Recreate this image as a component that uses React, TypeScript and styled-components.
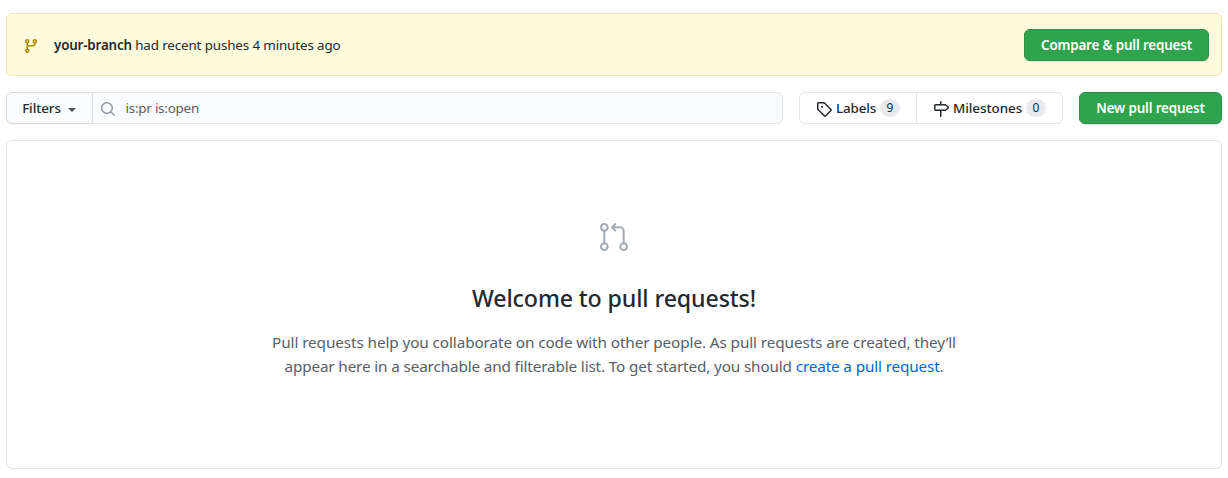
import React from "react";
import styled, { createGlobalStyle } from "styled-components";

const GlobalStyle = createGlobalStyle`
  * { box-sizing: border-box; }
  body {
    margin: 0;
    background: #fff;
    color: #24292e;
    font: 13.4px/20px "Segoe UI", "Noto Sans", sans-serif;
  }
`;

const Page = styled.main`
  display: flex;
  flex-direction: column;
  gap: 16px;
  padding: 13px 6px 0;
`;

const Text = styled.span<{ $width: number; $spacing: number }>`
  flex: none;
  width: ${(p) => p.$width}px;
  font-weight: 500;
  letter-spacing: ${(p) => p.$spacing}px;
  white-space: nowrap;
`;

const Flash = styled.section`
  display: flex;
  align-items: center;
  height: 63px;
  padding: 0 12px 0 16px;
  border: 1px solid #f0e3ad;
  border-radius: 6px;
  background: #fffbdd;
`;

const FlashMessage = styled.div`
  display: flex;
  align-items: center;
  flex: 1;
  gap: 15px;
  padding-top: 1px;
`;

const FlashText = styled.p`
  margin: 0;
  letter-spacing: -0.13px;

  strong {
    font-weight: 600;
    letter-spacing: -0.18px;
  }
`;

const PrimaryButton = styled.button<{ $width: number }>`
  width: ${(p) => p.$width}px;
  height: 32px;
  padding: 0;
  border: 1px solid #2a8f47;
  border-radius: 6px;
  background: #2ea44f;
  color: #fff;
  font: inherit;
  font-weight: 600;
  letter-spacing: -0.15px;
  white-space: nowrap;
  box-shadow: 0 1px 0 rgba(27, 31, 35, 0.1);
`;

const Toolbar = styled.div`
  display: flex;
  gap: 16px;
  height: 32px;
`;

const SearchGroup = styled.div`
  display: flex;
  flex: 1;
`;

const FilterButton = styled.button`
  display: flex;
  align-items: center;
  width: 87px;
  padding: 0 0 0 15px;
  border: 1px solid #d9dcdf;
  border-radius: 6px 0 0 6px;
  background: #fafbfc;
  color: #24292e;
  font: inherit;
  box-shadow: 0 1px 0 rgba(27, 31, 35, 0.04);
`;

const Caret = styled.i`
  margin: 3px 0 0 7px;
  border: 4px solid transparent;
  border-top-color: #4c5156;
  border-bottom: 0;
`;

const SearchField = styled.div`
  display: flex;
  align-items: center;
  flex: 1;
  gap: 9.5px;
  padding-left: 7px;
  border: 1px solid #e1e4e8;
  border-left: 0;
  border-radius: 0 6px 6px 0;
  background: #fafbfc;
  color: #586069;
  letter-spacing: -0.22px;
`;

const Subnav = styled.nav`
  display: flex;
  width: 264px;
  border: 1px solid #e1e4e8;
  border-radius: 6px;
`;

const SubnavItem = styled.a<{ $width: number }>`
  display: flex;
  align-items: center;
  gap: 4px;
  width: ${(p) => p.$width}px;
  padding-left: 16px;

  & + & {
    border-left: 1px solid #e1e4e8;
  }
`;

const Counter = styled.span`
  width: 20px;
  height: 18px;
  border-radius: 9px;
  background: #e8eaed;
  font-size: 12px;
  line-height: 18px;
  text-align: center;
`;

const Blankslate = styled.section`
  display: flex;
  flex-direction: column;
  align-items: center;
  height: 329px;
  padding-top: 80px;
  border: 1px solid #e1e4e8;
  border-radius: 6px;
`;

const Heading = styled.h3`
  margin: 27px 0 0;
  font-size: 23.2px;
  font-weight: 500;
  line-height: 36px;
  letter-spacing: -0.12px;
`;

const Description = styled.p`
  margin: 14px 0 0;
  color: #586069;
  font-size: 15.3px;
  line-height: 24px;
  text-align: center;
`;

const Line = styled.span<{ $spacing: number }>`
  display: block;
  white-space: nowrap;
  letter-spacing: ${(p) => p.$spacing}px;
`;

const Link = styled.a`
  color: #0366d6;
`;

const Glyph = styled.svg`
  flex: none;
  display: block;
`;

const SmallGlyph = styled(Glyph)`
  margin-top: 2px;
`;

function Icon({ d, color = "#24292e" }: { d: string; color?: string }) {
  return (
    <SmallGlyph width="16" height="16" viewBox="0 0 16 16" fill={color} fillRule="evenodd">
      <path d={d} />
    </SmallGlyph>
  );
}

const branch =
  "M11.75 2.5a.75.75 0 100 1.5.75.75 0 000-1.5zm-2.25.75a2.25 2.25 0 113 2.122V6A2.5 2.5 0 0110 8.5H6a1 1 0 00-1 1v1.128a2.251 2.251 0 11-1.5 0V5.372a2.25 2.25 0 111.5 0v1.836A2.492 2.492 0 016 7h4a1 1 0 001-1v-.628A2.25 2.25 0 019.5 3.25zM4.25 12a.75.75 0 100 1.5.75.75 0 000-1.5zM3.5 3.25a.75.75 0 111.5 0 .75.75 0 01-1.5 0z";
const search =
  "M11.5 7a4.499 4.499 0 11-8.998 0A4.499 4.499 0 0111.5 7zm-.82 4.74a6 6 0 111.06-1.06l3.04 3.04a.75.75 0 11-1.06 1.06l-3.04-3.04z";
const tag =
  "M2.5 7.775V2.75a.25.25 0 01.25-.25h5.025a.25.25 0 01.177.073l6.25 6.25a.25.25 0 010 .354l-5.025 5.025a.25.25 0 01-.354 0l-6.25-6.25a.25.25 0 01-.073-.177zm-1.5 0V2.75C1 1.784 1.784 1 2.75 1h5.025c.464 0 .91.184 1.238.513l6.25 6.25a1.75 1.75 0 010 2.474l-5.026 5.026a1.75 1.75 0 01-2.474 0l-6.25-6.25A1.75 1.75 0 011 7.775zM6 5a1 1 0 100 2 1 1 0 000-2z";
const milestone =
  "M7.75 0a.75.75 0 01.75.75V3h3.634c.414 0 .814.147 1.13.414l2.07 1.75a1.75 1.75 0 010 2.672l-2.07 1.75a1.75 1.75 0 01-1.13.414H8.5v5.25a.75.75 0 11-1.5 0V10H2.75A1.75 1.75 0 011 8.25v-3.5C1 3.784 1.784 3 2.75 3H7V.75A.75.75 0 017.75 0zm0 8.5h4.384a.25.25 0 00.161-.06l2.07-1.75a.25.25 0 000-.38l-2.07-1.75a.25.25 0 00-.161-.06H2.75a.25.25 0 00-.25.25v3.5c0 .138.112.25.25.25h5z";

export default function App() {
  return (
    <>
      <GlobalStyle />
      <Page>
        <Flash>
          <FlashMessage>
            <Icon d={branch} color="#b08800" />
            <FlashText>
              <strong>your-branch</strong> had recent pushes 4 minutes ago
            </FlashText>
          </FlashMessage>
          <PrimaryButton $width={185}>Compare &amp; pull request</PrimaryButton>
        </Flash>
        <Toolbar>
          <SearchGroup>
            <FilterButton>
              <Text $width={39} $spacing={-0.08}>Filters</Text>
              <Caret />
            </FilterButton>
            <SearchField>
              <Icon d={search} color="#959da5" />
              <span>is:pr is:open</span>
            </SearchField>
          </SearchGroup>
          <Subnav>
            <SubnavItem $width={116}>
              <Icon d={tag} />
              <Text $width={40} $spacing={-0.15}>Labels</Text>
              <Counter>9</Counter>
            </SubnavItem>
            <SubnavItem $width={146}>
              <Icon d={milestone} />
              <Text $width={69} $spacing={-0.05}>Milestones</Text>
              <Counter>0</Counter>
            </SubnavItem>
          </Subnav>
          <PrimaryButton $width={143}>New pull request</PrimaryButton>
        </Toolbar>
        <Blankslate>
          <Glyph
            width="32"
            height="32"
            viewBox="0 0 24 24"
            fill="none"
            stroke="#a3aab1"
            strokeWidth="1.5"
            strokeLinecap="round"
            strokeLinejoin="round"
          >
            <circle cx="4.75" cy="4.75" r="2.5" />
            <circle cx="4.75" cy="19.25" r="2.5" />
            <circle cx="19.25" cy="19.25" r="2.5" />
            <path d="M4.75 7.25v9.5M19.25 16.75V7.5a2.75 2.75 0 0 0-2.75-2.75h-6M13 2.25l-2.5 2.5 2.5 2.5" />
          </Glyph>
          <Heading>Welcome to pull requests!</Heading>
          <Description>
            <Line $spacing={-0.1}>
              Pull requests help you collaborate on code with other people. As pull requests are created, they’ll
            </Line>
            <Line $spacing={-0.147}>
              appear here in a searchable and filterable list. To get started, you should{" "}
              <Link>create a pull request</Link>.
            </Line>
          </Description>
        </Blankslate>
      </Page>
    </>
  );
}
